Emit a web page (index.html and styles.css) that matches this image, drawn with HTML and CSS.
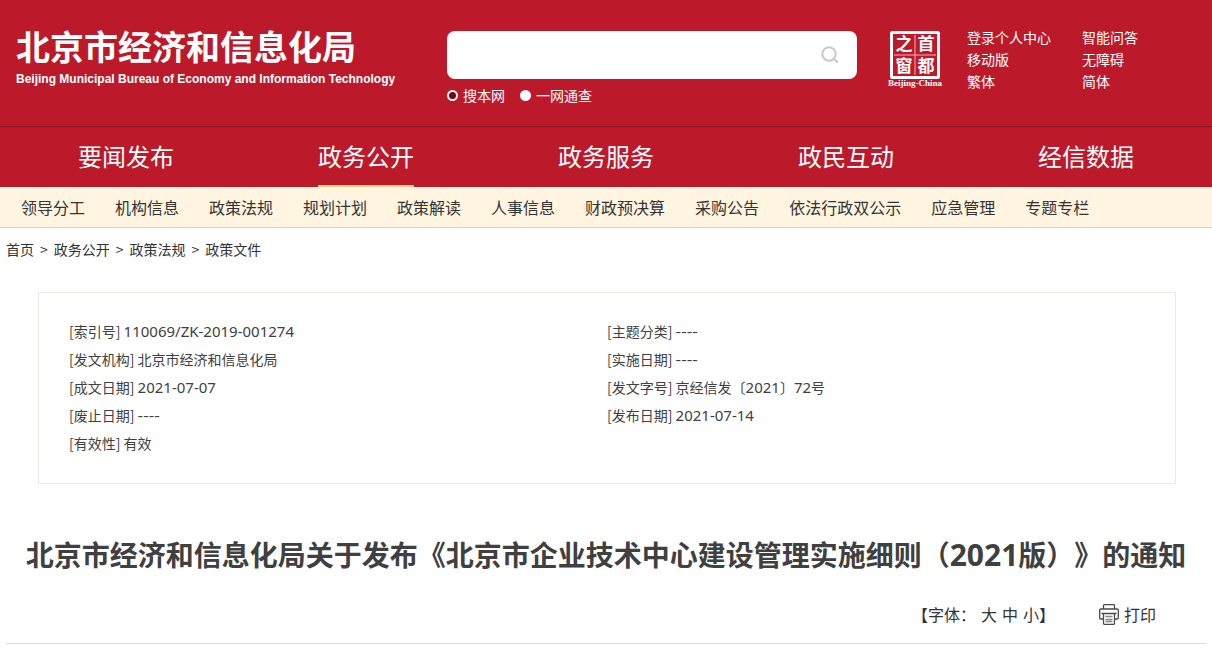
FILE: index.html
```html
<!DOCTYPE html>
<html lang="zh-CN">
<head>
<meta charset="utf-8">
<meta name="viewport" content="width=device-width, initial-scale=1">
<title>北京市经济和信息化局</title>
<link rel="stylesheet" href="styles.css">
</head>
<body>
<header class="site-header">
  <div class="wrap header-inner">
    <a class="brand" href="#">
      <span class="brand-cn">北京市经济和信息化局</span>
      <span class="brand-en" lang="en">Beijing Municipal Bureau of Economy and Information Technology</span>
    </a>
    <form class="search">
      <div class="search-box">
        <input class="search-input" type="text" aria-label="搜索">
        <button class="search-button" type="button" aria-label="搜索">
          <svg width="18" height="18" viewBox="0 0 18 18" fill="none" stroke="#c9c9c9" stroke-width="2"><circle cx="8" cy="8" r="6.7"/><path d="M12.8 12.8l4 3.6"/></svg>
        </button>
      </div>
      <div class="scope">
        <label class="scope-option"><input class="radio" type="radio" name="scope" checked>搜本网</label>
        <label class="scope-option"><input class="radio" type="radio" name="scope">一网通查</label>
      </div>
    </form>
    <a class="seal" href="#" aria-label="首都之窗">
      <svg width="56" height="60" viewBox="0 0 56 60">
        <rect x="4.5" y="3.5" width="47" height="45" rx="1" fill="none" stroke="#fff" stroke-width="3"/>
        <path d="M28 6v40M7 26h42" stroke="#eeb4ba" stroke-width="1"/>
        <g class="seal-char" fill="#fff" text-anchor="middle">
          <text x="17" y="21">之</text><text x="39" y="21">首</text>
          <text x="17" y="43">窗</text><text x="39" y="43">都</text>
        </g>
        <text class="seal-caption" x="28" y="57" fill="#fff" text-anchor="middle">Beijing-China</text>
      </svg>
    </a>
    <ul class="quick-links">
      <li><a href="#">登录个人中心</a></li>
      <li><a href="#">智能问答</a></li>
      <li><a href="#">移动版</a></li>
      <li><a href="#">无障碍</a></li>
      <li><a href="#">繁体</a></li>
      <li><a href="#">简体</a></li>
    </ul>
  </div>
</header>
<nav class="main-nav">
  <ul class="wrap main-list">
    <li><a class="main-link" href="#">要闻发布</a></li>
    <li><a class="main-link active" href="#">政务公开</a></li>
    <li><a class="main-link" href="#">政务服务</a></li>
    <li><a class="main-link" href="#">政民互动</a></li>
    <li><a class="main-link" href="#">经信数据</a></li>
  </ul>
</nav>
<nav class="sub-nav">
  <ul class="wrap sub-list">
    <li><a href="#">领导分工</a></li>
    <li><a href="#">机构信息</a></li>
    <li><a href="#">政策法规</a></li>
    <li><a href="#">规划计划</a></li>
    <li><a href="#">政策解读</a></li>
    <li><a href="#">人事信息</a></li>
    <li><a href="#">财政预决算</a></li>
    <li><a href="#">采购公告</a></li>
    <li><a href="#">依法行政双公示</a></li>
    <li><a href="#">应急管理</a></li>
    <li><a href="#">专题专栏</a></li>
  </ul>
</nav>
<main class="wrap">
  <div class="crumbs">
    <a href="#">首页</a><span>&gt;</span><a href="#">政务公开</a><span>&gt;</span><a href="#">政策法规</a><span>&gt;</span><a href="#">政策文件</a>
  </div>
  <section class="meta">
    <ul class="meta-column">
      <li>[索引号] <span class="num">110069/ZK-2019-001274</span></li>
      <li>[发文机构] 北京市经济和信息化局</li>
      <li>[成文日期] <span class="num">2021-07-07</span></li>
      <li>[废止日期] <span class="dashes">----</span></li>
      <li>[有效性] 有效</li>
    </ul>
    <ul class="meta-column">
      <li>[主题分类] <span class="dashes">----</span></li>
      <li>[实施日期] <span class="dashes">----</span></li>
      <li>[发文字号] 京经信发〔<span class="num">2021</span>〕<span class="num">72</span>号</li>
      <li>[发布日期] <span class="num">2021-07-14</span></li>
    </ul>
  </section>
  <h1 class="title">北京市经济和信息化局关于发布《北京市企业技术中心建设管理实施细则（<span class="title-num">2021</span>版）》的通知</h1>
  <div class="tools">
    <div class="font-size">
      <span>【字体：</span>
      <button type="button">大</button>
      <button type="button">中</button>
      <span><button type="button">小</button>】</span>
    </div>
    <button class="print" type="button">
      <svg width="20" height="21" viewBox="0 0 20 21" fill="none" stroke="#4a4a4a" stroke-width="1.3"><path d="M4.5 5V1.5Q4.5.7 5.3.7h9.4q.8 0 .8.8V5M4.5 15H2Q.7 15 .7 13.700V6.300Q.7 5 2 5h16q1.300 0 1.300 1.300v7.400Q19.300 15 18 15h-2.500M2.500 9.500h15M4.500 9.500v10q0 .8.8.8h9.400q.8 0 .8-.8v-10"/><path d="M6.500 12.500h7M6.500 15.500h7M6.500 17.500h7" stroke="#888"/></svg>打印
    </button>
  </div>
</main>
</body>
</html>
```
FILE: styles.css
```css
* {
  box-sizing: border-box;
}

body {
  margin: 0;
  background: #fff;
  color: #333;
  font: 14px/20px "Noto Sans CJK SC", "Noto Sans", sans-serif;
  text-spacing-trim: space-all;
}

ul {
  margin: 0;
  padding: 0;
  list-style: none;
}

a {
  color: inherit;
  text-decoration: none;
}

button {
  padding: 0;
  border: 0;
  background: none;
  color: inherit;
  font: inherit;
  cursor: pointer;
}

.wrap {
  max-width: 1200px;
  margin: 0 auto;
}

.site-header {
  padding-bottom: 21px;
  border-bottom: 1px solid #8c1420;
  background: #bc1a2b;
  color: #fff;
}

.header-inner {
  display: flex;
  align-items: flex-start;
  padding: 25px 0 0 10px;
}

.brand {
  display: flex;
  flex-direction: column;
  width: 431px;
  white-space: nowrap;
}

.brand-cn {
  font-size: 34px;
  font-weight: 700;
  line-height: 42px;
}

.brand-en {
  font: 700 12px/24px "Liberation Sans", sans-serif;
}

.search {
  width: 410px;
  padding-top: 6px;
}

.search-box {
  display: flex;
  align-items: center;
  height: 48px;
  padding: 0 18px;
  border-radius: 8px;
  background: #fff;
}

.search-input {
  flex: 1;
  min-width: 0;
  height: 40px;
  border: 0;
  outline: 0;
  background: transparent;
  font: inherit;
}

.search-button {
  display: flex;
}

.scope {
  display: flex;
  gap: 15px;
  padding-top: 6px;
}

.scope-option {
  display: flex;
  align-items: center;
  gap: 5px;
}

.radio {
  width: 11px;
  height: 11px;
  margin: 0;
  border: 2px solid #fff;
  border-radius: 50%;
  background: #fff;
  appearance: none;
}

.radio:checked {
  background: #800006;
}

.seal {
  display: flex;
  margin: 4px 0 0 30px;
}

.seal-char {
  font: 700 17px "Noto Sans CJK SC", sans-serif;
}

.seal-caption {
  font: 700 9px "Liberation Serif", serif;
}

.quick-links {
  display: grid;
  grid-template-columns: 115px auto;
  margin-left: 24px;
  padding-top: 1px;
  line-height: 22px;
}

.main-nav {
  background: #bc1a2b;
  color: #fff;
}

.main-list {
  display: grid;
  grid-template-columns: repeat(5, 1fr);
  justify-items: center;
}

.main-link {
  display: block;
  border-bottom: 2px solid transparent;
  font-size: 24px;
  line-height: 58px;
}

.main-link.active {
  border-color: #f8cf87;
}

.sub-nav {
  border-bottom: 1px solid #f5cd8a;
  background: #fff5e1;
}

.sub-list {
  display: flex;
  gap: 30px;
  padding-left: 15px;
  font-size: 16px;
  line-height: 40px;
  white-space: nowrap;
}

.crumbs {
  display: flex;
  gap: 6px;
  padding-top: 11px;
}

.meta {
  display: grid;
  grid-template-columns: 1fr 1fr;
  margin: 33px 30px 0 32px;
  padding: 24px 30px 26px;
  border: 1px solid #e9e9e0;
  line-height: 28px;
}

.meta-column {
  color: #404040;
}

.num {
  font-family: "Noto Sans", sans-serif;
  font-size: 15px;
  line-height: 20px;
}

.dashes {
  font-size: 16px;
  line-height: 20px;
}

.title {
  margin: 49px 0 0;
  color: #404040;
  font-size: 28px;
  font-weight: 700;
  line-height: 42px;
  text-align: center;
}

.title-num {
  font-family: "Noto Sans", sans-serif;
  font-size: 30px;
}

.tools {
  display: flex;
  justify-content: flex-end;
  gap: 44px;
  margin: 24px 0 0;
  padding: 0 50px 15px 0;
  border-bottom: 1px solid #ddd;
  font-size: 16px;
  line-height: 28px;
}

.font-size {
  display: flex;
  gap: 5px;
}

.print {
  display: flex;
  align-items: center;
  gap: 5px;
}
```
